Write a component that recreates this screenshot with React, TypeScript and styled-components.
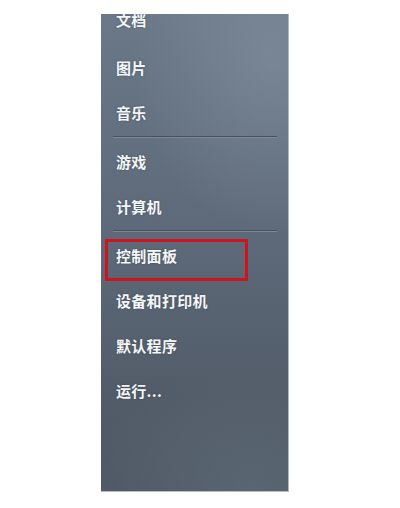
import styled, { createGlobalStyle } from "styled-components";

const GlobalStyle = createGlobalStyle`
  html, body {
    margin: 0;
    padding: 0;
    background: #ffffff;
  }
  body {
    width: 400px;
    height: 508px;
    overflow: hidden;
  }
`;

type Entry = { label: string; highlighted?: boolean } | { separator: true };

const entries: Entry[] = [
  { label: "文档" },
  { label: "图片" },
  { label: "音乐" },
  { separator: true },
  { label: "游戏" },
  { label: "计算机" },
  { separator: true },
  { label: "控制面板", highlighted: true },
  { label: "设备和打印机" },
  { label: "默认程序" },
  { label: "运行..." },
];

const App = () => {
  return (
    <>
      <GlobalStyle />
      <Page>
        <Panel>
          <List>
            {entries.map((entry, i) =>
              "separator" in entry ? (
                <Separator key={i} />
              ) : (
                <Item key={i} $highlighted={entry.highlighted} $first={i === 0}>
                  {entry.label}
                </Item>
              )
            )}
          </List>
        </Panel>
      </Page>
    </>
  );
};

export default App;

const Page = styled.div`
  width: 400px;
  height: 508px;
  padding: 14px 0 0 101px;
  box-sizing: border-box;
`;

const Panel = styled.div`
  width: 188px;
  height: 478px;
  overflow: hidden;
  box-sizing: border-box;
  border-right: 1px solid #aeb8c3;
  border-bottom: 1px solid #b4bec8;
  background:
    radial-gradient(ellipse 140px 180px at 170px 40px, rgba(140, 154, 170, 0.45), rgba(140, 154, 170, 0) 100%),
    radial-gradient(ellipse 160px 120px at 150px 470px, rgba(110, 122, 136, 0.35), rgba(110, 122, 136, 0) 100%),
    linear-gradient(to bottom, #6a7888 0%, #5e6a7a 45%, #525c69 80%, #4f5966 100%);
`;

const List = styled.div`
  display: flex;
  flex-direction: column;
  margin-top: -20px;
`;

const Item = styled.div<{ $highlighted?: boolean; $first?: boolean }>`
  position: relative;
  height: ${(p) => (p.$first ? "51px" : "45px")};
  display: flex;
  align-items: center;
  padding-left: 15px;
  font-family: "Noto Sans CJK SC", "Noto Sans", sans-serif;
  font-size: 15px;
  font-weight: 700;
  color: #f4f6f8;
  text-shadow: 0 0 2px rgba(40, 50, 60, 0.5);
  letter-spacing: 0.3px;

  &::after {
    content: "";
    display: ${(p) => (p.$highlighted ? "block" : "none")};
    position: absolute;
    left: 4px;
    top: 6px;
    width: 143px;
    height: 42px;
    box-sizing: border-box;
    border: 3px solid #d0141e;
  }
`;

const Separator = styled.div`
  height: 4px;
  margin: 0 11px 0 12px;
  display: flex;
  flex-direction: column;
  justify-content: center;

  &::before {
    content: "";
    height: 1px;
    background: #48525e;
  }
  &::after {
    content: "";
    height: 1px;
    background: #7c8896;
  }
`;
